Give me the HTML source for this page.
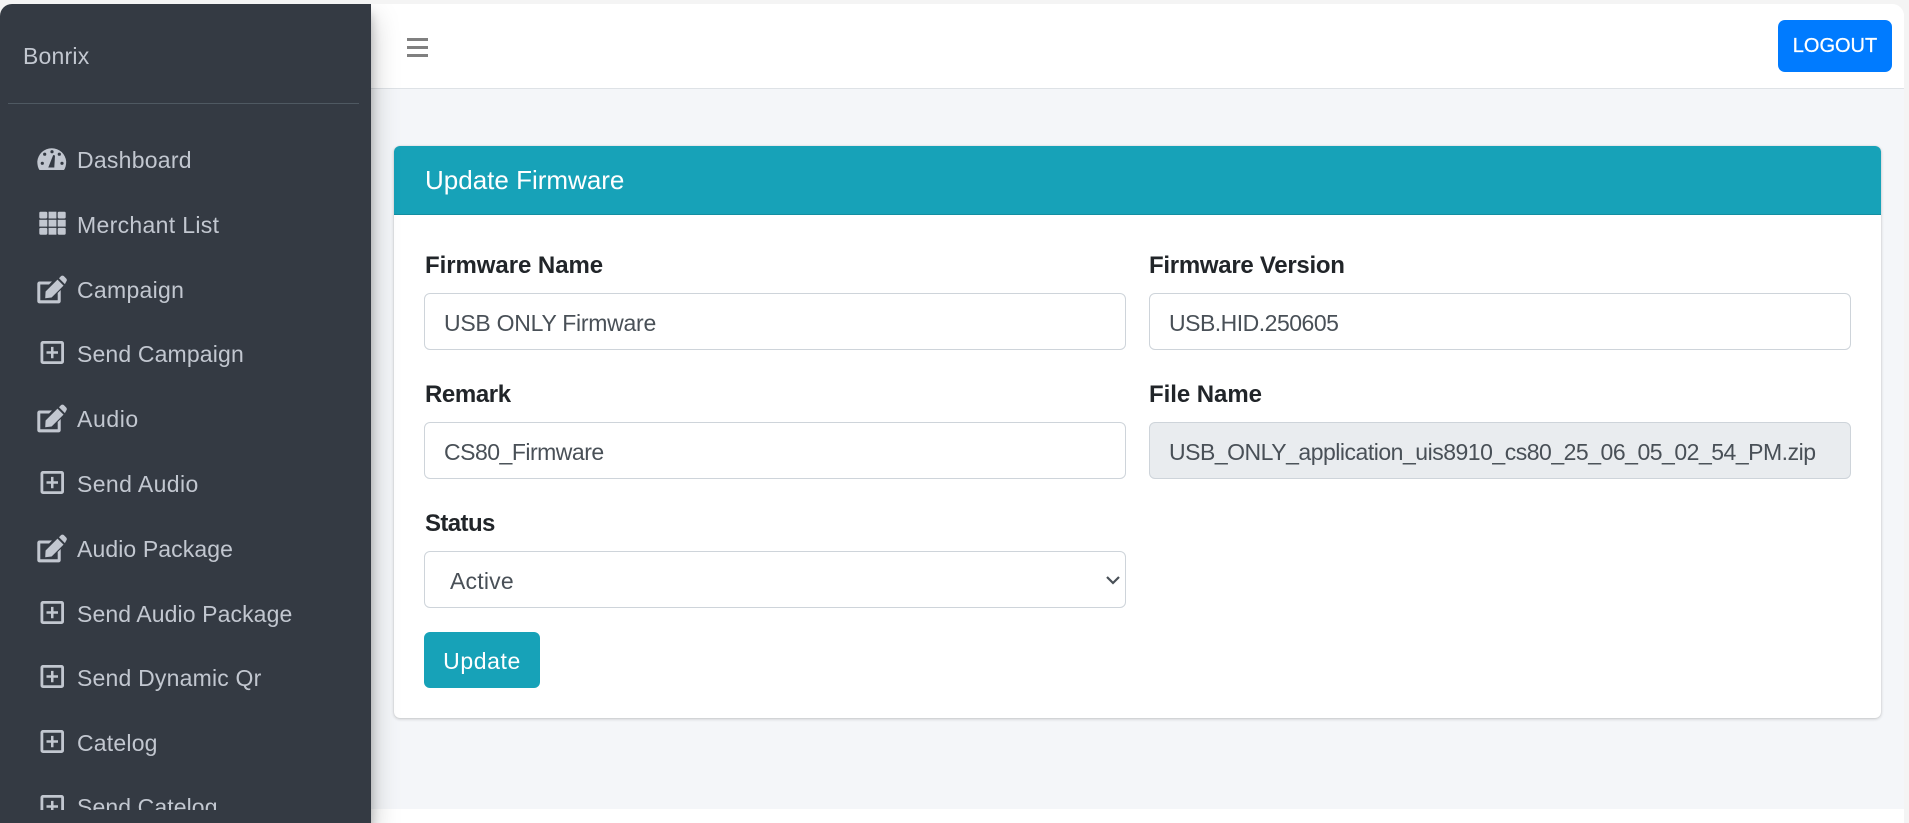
<!DOCTYPE html>
<html>
<head>
<meta charset="utf-8">
<title>Update Firmware</title>
<style>
html,body{margin:0;padding:0;width:1909px;height:823px;overflow:hidden;background:#f4f4f4;font-family:"Liberation Sans",Arial,sans-serif}
*{box-sizing:border-box}
#app{position:absolute;left:0;top:4px;width:1904px;height:819px;background:#fff;border-radius:12px 12px 0 0;overflow:hidden}
#nav{position:absolute;left:371px;top:0;width:1533px;height:85px;background:#fff;border-bottom:1px solid #dee2e6}
#content{position:absolute;left:371px;top:85px;width:1533px;height:720px;background:#f4f6f9}
#side{position:absolute;left:0;top:0;width:371px;height:819px;background:#343a43;box-shadow:0 14px 28px rgba(0,0,0,.25),0 10px 10px rgba(0,0,0,.22);z-index:5;border-radius:8px 0 0 0}
#clip{position:absolute;left:0;top:0;width:371px;height:806px;overflow:hidden}
.t{position:absolute;white-space:nowrap;line-height:30px}
.m{left:77px;font-size:23px;color:#c2c7d0}
#hr{position:absolute;left:8px;top:99px;width:351px;height:1px;background:#4f5962}
svg.i{position:absolute;left:0;top:0}
.bar{position:absolute;left:36px;width:21px;height:3.4px;background:#808080}
#logout{position:absolute;left:1407px;top:16px;width:114px;height:52px;background:#007bff;border:0;border-radius:7px;color:#fff;font:20px "Liberation Sans",Arial,sans-serif;-webkit-text-stroke:.25px #fff;padding:0}
#card{position:absolute;left:394px;top:142px;width:1487px;height:572px;background:#fff;border-radius:6px;box-shadow:0 0 1px rgba(0,0,0,.125),0 1px 3px rgba(0,0,0,.2);z-index:1}
#head{position:absolute;left:0;top:0;width:100%;height:69px;background:#17a2b8;border-bottom:1px solid #148ea1;border-radius:6px 6px 0 0}
#head span{position:absolute;left:31px;top:18px;font-size:26px;line-height:32px;color:#fff;white-space:nowrap}
label{position:absolute;font-weight:bold;font-size:24px;line-height:30px;color:#212529;white-space:nowrap}
input,select{position:absolute;height:57px;border:1px solid #ced4da;border-radius:6px;background:#fff;color:#495057;font:23px "Liberation Sans",Arial,sans-serif;padding:3px 19px 0;outline:0;margin:0}
select{appearance:none;-webkit-appearance:none;padding-left:25px;letter-spacing:.2px}
input[disabled]{background:#e9ecef;opacity:1;-webkit-text-fill-color:#495057}
#upd{position:absolute;left:30px;top:486px;width:116px;height:56px;background:#17a2b8;border:0;border-radius:6px;color:#fff;font:23px "Liberation Sans",Arial,sans-serif;padding:2px 0 0;letter-spacing:.6px}
</style>
</head>
<body>
<div id="app">
  <div id="nav">
    <div class="bar" style="top:34px"></div>
    <div class="bar" style="top:42px"></div>
    <div class="bar" style="top:49.6px"></div>
    <button id="logout">LOGOUT</button>
  </div>
  <div id="content"></div>

  <div id="card">
    <div id="head"><span>Update Firmware</span></div>
    <label style="left:31px;top:105px;letter-spacing:-.05px">Firmware Name</label>
    <input style="left:30px;top:147px;width:702px;letter-spacing:-.26px" value="USB ONLY Firmware">
    <label style="left:755px;top:105px;letter-spacing:-.28px">Firmware Version</label>
    <input style="left:755px;top:147px;width:702px;letter-spacing:-.5px" value="USB.HID.250605">
    <label style="left:31px;top:234px;letter-spacing:-.4px">Remark</label>
    <input style="left:30px;top:276px;width:702px;letter-spacing:-.5px" value="CS80_Firmware">
    <label style="left:755px;top:234px;letter-spacing:-.05px">File Name</label>
    <input disabled style="left:755px;top:276px;width:702px;letter-spacing:-.49px" value="USB_ONLY_application_uis8910_cs80_25_06_05_02_54_PM.zip">
    <label style="left:31px;top:363px;letter-spacing:-.6px">Status</label>
    <select style="left:30px;top:405px;width:702px"><option>Active</option></select>
    <svg style="position:absolute;left:710px;top:428px" width="18" height="14" viewBox="0 0 18 14"><path d="M3 3 L9 9 L15 3" fill="none" stroke="#495057" stroke-width="2.2"/></svg>
    <button id="upd">Update</button>
  </div>

  <div id="side">
    <div id="clip">
      <div class="t" style="left:23px;top:37px;font-size:23px;color:#c2c7d0;letter-spacing:.2px">Bonrix</div>
      <div id="hr"></div>

      <svg class="i" width="371" height="806" viewBox="0 4 371 806" fill="#c2c7d0">
        <!-- gauge -->
        <path d="M37.3 161.5A14.5 14.5 0 0 1 66.2 161.5C66.2 165 65.4 168 64 170L39.5 170C38 168 37.3 165 37.3 161.5Z"/>
        <g fill="#343a43">
          <circle cx="42.3" cy="163.3" r="1.6"/><circle cx="44.7" cy="154.2" r="1.6"/><circle cx="52" cy="151.7" r="1.6"/><circle cx="59.3" cy="154.2" r="1.6"/><circle cx="62" cy="163.3" r="1.6"/>
          <path d="M48.3 167.5L53.2 155L55 155.5L54.3 167.5Z"/>
        </g>
        <!-- grid -->
        <g>
          <rect x="39.3" y="211.7" width="8" height="6.8" rx="1.2"/><rect x="48.6" y="211.7" width="7.8" height="6.8"/><rect x="57.7" y="211.7" width="8" height="6.8" rx="1.2"/>
          <rect x="39.3" y="219.8" width="8" height="6.8"/><rect x="48.6" y="219.8" width="7.8" height="6.8"/><rect x="57.7" y="219.8" width="8" height="6.8"/>
          <rect x="39.3" y="227.9" width="8" height="6.8" rx="1.2"/><rect x="48.6" y="227.9" width="7.8" height="6.8"/><rect x="57.7" y="227.9" width="8" height="6.8" rx="1.2"/>
        </g>
        <defs>
          <g id="ed">
            <path d="M39.5 6.5H52L49 9.5H40.3V25.2H57.7V18L60.7 15V26.2A2.2 2.2 0 0 1 58.5 28.4H39.5A2.2 2.2 0 0 1 37.3 26.2V8.7A2.2 2.2 0 0 1 39.5 6.5Z"/>
            <path d="M45.6 16.5L57.5 4.6L63.5 10.6L51.6 22.5L45.2 23.2Z"/>
            <path d="M59 3.2L60.9 1.3A2.2 2.2 0 0 1 64 1.3L66.2 3.5A2.2 2.2 0 0 1 66.2 6.6L64.9 9.1Z"/>
          </g>
          <g id="pl">
            <path fill-rule="evenodd" d="M43 0H61.5A2.5 2.5 0 0 1 64 2.5V20.5A2.5 2.5 0 0 1 61.5 23H43A2.5 2.5 0 0 1 40.5 20.5V2.5A2.5 2.5 0 0 1 43 0ZM43.3 2.8V20.2H61.2V2.8Z"/>
            <path d="M51 5.9H53.5V10.3H58V12.8H53.5V17.2H51V12.8H46.5V10.3H51Z"/>
          </g>
        </defs>
        <use href="#ed" y="275"/>
        <use href="#ed" y="404"/>
        <use href="#ed" y="534"/>
        <use href="#pl" y="341"/>
        <use href="#pl" y="471"/>
        <use href="#pl" y="601"/>
        <use href="#pl" y="665"/>
        <use href="#pl" y="730"/>
        <use href="#pl" y="795"/>
      </svg>

      <div class="t m" style="top:141px;letter-spacing:.25px">Dashboard</div>
      <div class="t m" style="top:206px;letter-spacing:.33px">Merchant List</div>
      <div class="t m" style="top:271px;letter-spacing:.3px">Campaign</div>
      <div class="t m" style="top:335px;letter-spacing:.15px">Send Campaign</div>
      <div class="t m" style="top:400px;letter-spacing:.6px">Audio</div>
      <div class="t m" style="top:465px;letter-spacing:.4px">Send Audio</div>
      <div class="t m" style="top:530px;letter-spacing:.1px">Audio Package</div>
      <div class="t m" style="top:595px;letter-spacing:.1px">Send Audio Package</div>
      <div class="t m" style="top:659px;letter-spacing:.2px">Send Dynamic Qr</div>
      <div class="t m" style="top:724px;letter-spacing:.2px">Catelog</div>
      <div class="t m" style="top:788px;letter-spacing:.1px">Send Catelog</div>
    </div>
  </div>
</div>
</body>
</html>
